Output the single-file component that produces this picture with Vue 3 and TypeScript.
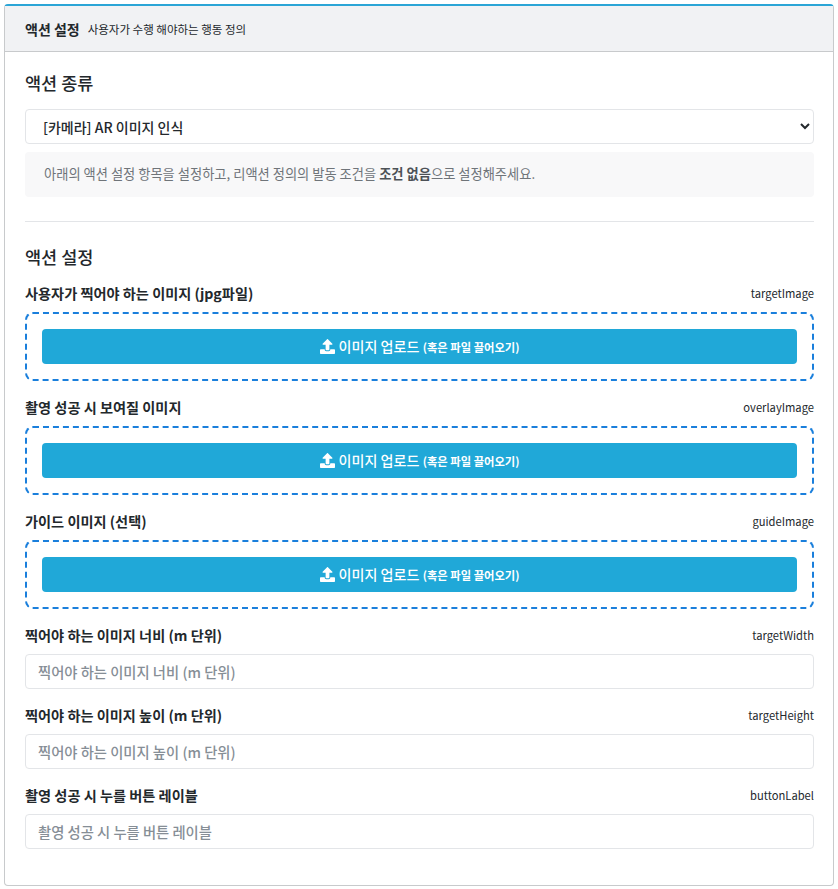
<script setup lang="ts">
type Field = { label: string; key: string };

const uploads: Field[] = [
  { label: "사용자가 찍어야 하는 이미지 (jpg파일)", key: "targetImage" },
  { label: "촬영 성공 시 보여질 이미지", key: "overlayImage" },
  { label: "가이드 이미지 (선택)", key: "guideImage" },
];

const inputs: Field[] = [
  { label: "찍어야 하는 이미지 너비 (m 단위)", key: "targetWidth" },
  { label: "찍어야 하는 이미지 높이 (m 단위)", key: "targetHeight" },
  { label: "촬영 성공 시 누를 버튼 레이블", key: "buttonLabel" },
];
</script>

<template>
  <div class="page">
    <section class="card">
      <header class="card-head">
        <strong class="head-title">액션 설정</strong>
        <span class="head-sub">사용자가 수행 해야하는 행동 정의</span>
      </header>
      <div class="card-body">
        <h3 class="section-title first">액션 종류</h3>
        <select class="select">
          <option>[카메라] AR 이미지 인식</option>
        </select>
        <p class="note">
          <span>아래의 액션 설정 항목을 설정하고, 리액션 정의의 발동 조건을 <b>조건 없음</b>으로 설정해주세요.</span>
        </p>
        <hr class="divider" />
        <h3 class="section-title">액션 설정</h3>

        <div v-for="f in uploads" :key="f.key" class="field">
          <div class="field-label">
            <label>{{ f.label }}</label>
            <span class="field-key">{{ f.key }}</span>
          </div>
          <div class="dropzone">
            <button class="upload-btn" type="button">
              <svg class="upload-icon" viewBox="0 0 512 512" width="15" height="15" aria-hidden="true">
                <path
                  fill="currentColor"
                  d="M296 384h-80c-13.300 0-24-10.700-24-24V192h-87.700c-17.800 0-26.700-21.500-14.100-34.100L242.300 5.700c7.500-7.500 19.800-7.500 27.300 0l152.200 152.200c12.600 12.600 3.700 34.100-14.100 34.100H320v168c0 13.300-10.700 24-24 24zm216-8v112c0 13.300-10.700 24-24 24H24c-13.300 0-24-10.700-24-24V376c0-13.300 10.700-24 24-24h136v8c0 30.900 25.100 56 56 56h80c30.900 0 56-25.100 56-56v-8h136c13.300 0 24 10.700 24 24z"
                />
              </svg>
              <span class="upload-text">이미지 업로드 <small>(혹은 파일 끌어오기)</small></span>
            </button>
          </div>
        </div>

        <div v-for="f in inputs" :key="f.key" class="field">
          <div class="field-label">
            <label>{{ f.label }}</label>
            <span class="field-key">{{ f.key }}</span>
          </div>
          <input class="text-input" type="text" :placeholder="f.label" />
        </div>
      </div>
    </section>
  </div>
</template>

<style>
html,
body {
  margin: 0;
  background: #fff;
}
</style>

<style scoped>
.page {
  padding: 4px;
  font-family: "Noto Sans CJK KR", "Noto Sans", sans-serif;
  color: #23282c;
  font-size: 14px;
}
.card {
  box-sizing: border-box;
  width: 830px;
  height: 882px;
  border: 1px solid #c8cacc;
  border-top: 2px solid #2ba5d6;
  border-radius: 4px;
  background: #fff;
}
.card-head {
  box-sizing: border-box;
  height: 46px;
  display: flex;
  align-items: center;
  gap: 8px;
  padding: 0 20px;
  background: #f1f2f4;
  border-bottom: 1px solid #c8cacc;
}
.head-title {
  font-size: 14px;
  font-weight: 700;
}
.head-sub {
  font-size: 11.5px;
}
.card-body {
  padding: 19px 19px 0 20px;
}
.section-title {
  margin: 0 0 13px;
  font-size: 17.5px;
  line-height: 24px;
  font-weight: 500;
}
.section-title.first {
  margin-bottom: 14px;
}
.select {
  display: block;
  box-sizing: border-box;
  width: 100%;
  height: 35px;
  padding: 0 8px 0 13px;
  border: 1px solid #e3e5e8;
  border-radius: 4px;
  background: #fff;
  color: #23282c;
  font: 500 14px "Noto Sans CJK KR", "Noto Sans", sans-serif;
}
.note {
  box-sizing: border-box;
  height: 45px;
  margin: 8px 0 24px;
  padding: 0 19px 2px;
  display: flex;
  align-items: center;
  border-radius: 4px;
  background: #f8f8f9;
  color: #6f7479;
  font-size: 13.25px;
}
.note b {
  font-weight: 700;
  color: #4c5156;
}
.divider {
  margin: 0 0 23px;
  border: 0;
  border-top: 1px solid #e3e5e8;
}
.field {
  margin-bottom: 15px;
}
.field-label {
  height: 21px;
  margin-bottom: 9px;
  display: flex;
  align-items: center;
  justify-content: space-between;
  font-size: 14.2px;
  font-weight: 700;
}
.field-key {
  font-size: 11.2px;
  font-weight: 400;
}
.dropzone {
  box-sizing: border-box;
  height: 69px;
  padding: 15px;
  border: 2px dashed #1a7fdc;
  border-radius: 8px;
}
.upload-btn {
  width: 100%;
  height: 35px;
  display: flex;
  align-items: center;
  justify-content: center;
  gap: 4px;
  border: 0;
  border-radius: 4px;
  background: #20a8d8;
  color: #fff;
  font: 500 14.1px "Noto Sans CJK KR", "Noto Sans", sans-serif;
}
.upload-text {
  margin-top: -1px;
}
.upload-btn small {
  font-size: 11.3px;
  font-weight: 700;
}
.upload-icon {
  flex: none;
}
.text-input {
  display: block;
  box-sizing: border-box;
  width: 100%;
  height: 35px;
  padding: 0 12px;
  border: 1px solid #e3e5e8;
  border-radius: 4px;
  font: 500 14.3px "Noto Sans CJK KR", "Noto Sans", sans-serif;
}
.text-input::placeholder {
  color: #868e96;
  opacity: 1;
}
</style>
